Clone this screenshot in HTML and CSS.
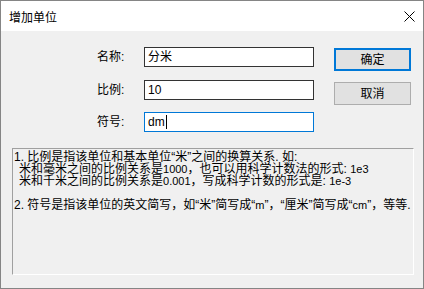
FILE: index.html
```html
<!DOCTYPE html>
<html lang="zh-CN">
<head>
<meta charset="utf-8">
<title>增加单位</title>
<link rel="stylesheet" href="styles.css">
</head>
<body>
<div class="window">
  <div class="titlebar">
    <span class="title">增加单位</span>
    <svg class="close" width="11" height="11" viewBox="0 0 11 11"><path d="M0.5 0.5 L10.5 10.5 M10.5 0.5 L0.5 10.5" stroke="#000" stroke-width="1" fill="none"/></svg>
  </div>
  <div class="body">
    <div class="top">
      <div class="fields">
        <div class="row">
          <span class="lbl">名称:</span>
          <div class="input">分米</div>
        </div>
        <div class="row row2">
          <span class="lbl">比例:</span>
          <div class="input">10</div>
        </div>
        <div class="row row3">
          <span class="lbl">符号:</span>
          <div class="input focused">dm<span class="caret"></span></div>
        </div>
      </div>
      <div class="buttons">
        <div class="btn default">确定</div>
        <div class="btn second">取消</div>
      </div>
    </div>
    <div class="note">
      <div class="line">1. 比例是指该单位和基本单位“米”之间的换算关系. 如:</div>
      <div class="line indent">米和毫米之间的比例关系是<span class="num">1000</span>，也可以用科学计数法的形式: <span class="num">1e3</span></div>
      <div class="line indent">米和千米之间的比例关系是<span class="num">0.001</span>，写成科学计数的形式是: <span class="num">1e-3</span></div>
      <div class="line blank"></div>
      <div class="line">2. 符号是指该单位的英文简写，如“米”简写成“<span class="num">m</span>”，“厘米”简写成“<span class="num">cm</span>”，等等.</div>
    </div>
  </div>
</div>
</body>
</html>
```

FILE: styles.css
```css
html, body {
  margin: 0;
  padding: 0;
  background: #ffffff;
}

body {
  font-family: "Liberation Sans", "Noto Sans CJK SC", sans-serif;
  font-size: 12px;
  color: #000;
}

.window {
  width: 424px;
  height: 289px;
  box-sizing: border-box;
  border: 1px solid #858585;
  display: flex;
  flex-direction: column;
  background: #f0f0f0;
}

.titlebar {
  height: 30px;
  flex: none;
  background: #ffffff;
  display: flex;
  align-items: center;
  justify-content: space-between;
  padding: 0 8px 0 8px;
}

.title {
  font-family: "Noto Sans CJK SC", sans-serif;
  font-size: 12px;
  line-height: 14px;
  margin-top: 1px;
}

.close {
  display: block;
  margin-top: 0px;
}

.body {
  flex: 1;
  background: #f0f0f0;
  padding-top: 16px;
}

.top {
  display: flex;
  padding-left: 96px;
}

.fields {
  display: flex;
  flex-direction: column;
}

.row {
  display: flex;
  align-items: center;
  height: 20px;
}

.row2 {
  margin-top: 13px;
}

.row3 {
  margin-top: 12px;
}

.lbl {
  width: 47px;
  line-height: 14px;
}

.input {
  width: 170px;
  height: 20px;
  box-sizing: border-box;
  border: 1px solid #333333;
  background: #ffffff;
  padding-left: 3px;
  display: flex;
  align-items: center;
  line-height: 14px;
}

.input.focused {
  border-color: #0078d7;
}

.caret {
  display: inline-block;
  width: 0;
  height: 14px;
  border-left: 1px solid #000;
  margin-left: 1px;
}

.buttons {
  margin-left: 20px;
  margin-top: 1px;
  display: flex;
  flex-direction: column;
}

.btn {
  width: 77px;
  height: 23px;
  box-sizing: border-box;
  background: #e1e1e1;
  border: 1px solid #adadad;
  display: flex;
  align-items: center;
  justify-content: center;
  line-height: 14px;
}

.btn.default {
  border: 2px solid #0078d7;
}

.btn.second {
  margin-top: 11px;
}

.note {
  margin: 16px 0 0 11px;
  width: 402px;
  height: 127px;
  box-sizing: border-box;
  border-top: 1px solid #a0a0a0;
  border-left: 1px solid #a0a0a0;
  border-right: 1px solid #ffffff;
  border-bottom: 1px solid #ffffff;
  padding: 2px 0 0 1px;
}

.line {
  line-height: 12px;
  height: 12px;
  white-space: nowrap;
}

.indent {
  padding-left: 5px;
}

.num {
  font-size: 11px;
}
```
